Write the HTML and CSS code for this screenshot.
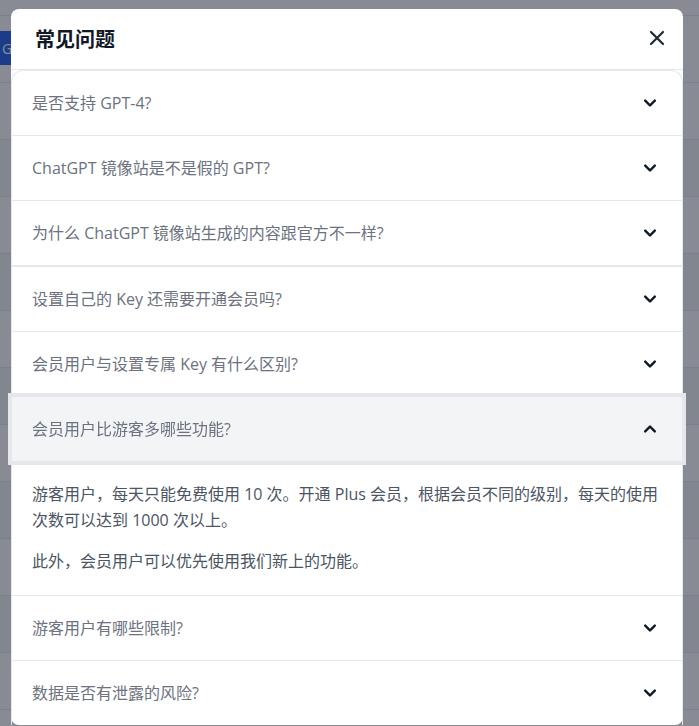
FILE: index.html
```html
<!DOCTYPE html>
<html>
<head>
  <meta charset="UTF-8">
  <link rel="stylesheet" href="styles.css">
</head>
<body>
  <div class="page">
    <div class="topbar"></div>
    <div class="toolbar">
      <button class="blue-button">GPT</button>
    </div>
    <div class="row"></div>
    <div class="row alt"></div>
    <div class="row"></div>
    <div class="row alt"></div>
    <div class="row"></div>
    <div class="row alt"></div>
    <div class="row"></div>
    <div class="row alt"></div>
    <div class="row"></div>
    <div class="row alt"></div>
    <div class="row"></div>
  </div>

  <div class="overlay">
    <div class="modal">
      <div class="modal-header">
        <h3>常见问题</h3>
        <button class="close-button">
          <svg viewBox="0 0 24 24" fill="none" stroke="currentColor" stroke-width="2.2" stroke-linecap="round"><path d="M6 6l12 12M18 6L6 18"/></svg>
        </button>
      </div>

      <div class="accordion">
        <div class="faq-item">
          <button class="question"><span>是否支持 GPT-4?</span>
            <svg class="chevron" viewBox="0 0 20 20" fill="currentColor"><path fill-rule="evenodd" d="M5.293 7.293a1 1 0 011.414 0L10 10.586l3.293-3.293a1 1 0 111.414 1.414l-4 4a1 1 0 01-1.414 0l-4-4a1 1 0 010-1.414z" clip-rule="evenodd"/></svg>
          </button>
        </div>
        <div class="faq-item">
          <button class="question"><span>ChatGPT 镜像站是不是假的 GPT?</span>
            <svg class="chevron" viewBox="0 0 20 20" fill="currentColor"><path fill-rule="evenodd" d="M5.293 7.293a1 1 0 011.414 0L10 10.586l3.293-3.293a1 1 0 111.414 1.414l-4 4a1 1 0 01-1.414 0l-4-4a1 1 0 010-1.414z" clip-rule="evenodd"/></svg>
          </button>
        </div>
        <div class="faq-item">
          <button class="question"><span>为什么 ChatGPT 镜像站生成的内容跟官方不一样?</span>
            <svg class="chevron" viewBox="0 0 20 20" fill="currentColor"><path fill-rule="evenodd" d="M5.293 7.293a1 1 0 011.414 0L10 10.586l3.293-3.293a1 1 0 111.414 1.414l-4 4a1 1 0 01-1.414 0l-4-4a1 1 0 010-1.414z" clip-rule="evenodd"/></svg>
          </button>
        </div>
        <div class="faq-item group-start">
          <button class="question"><span>设置自己的 Key 还需要开通会员吗?</span>
            <svg class="chevron" viewBox="0 0 20 20" fill="currentColor"><path fill-rule="evenodd" d="M5.293 7.293a1 1 0 011.414 0L10 10.586l3.293-3.293a1 1 0 111.414 1.414l-4 4a1 1 0 01-1.414 0l-4-4a1 1 0 010-1.414z" clip-rule="evenodd"/></svg>
          </button>
        </div>
        <div class="faq-item">
          <button class="question"><span>会员用户与设置专属 Key 有什么区别?</span>
            <svg class="chevron" viewBox="0 0 20 20" fill="currentColor"><path fill-rule="evenodd" d="M5.293 7.293a1 1 0 011.414 0L10 10.586l3.293-3.293a1 1 0 111.414 1.414l-4 4a1 1 0 01-1.414 0l-4-4a1 1 0 010-1.414z" clip-rule="evenodd"/></svg>
          </button>
        </div>
        <div class="faq-item open">
          <button class="question"><span>会员用户比游客多哪些功能?</span>
            <svg class="chevron" viewBox="0 0 20 20" fill="currentColor"><path fill-rule="evenodd" d="M5.293 7.293a1 1 0 011.414 0L10 10.586l3.293-3.293a1 1 0 111.414 1.414l-4 4a1 1 0 01-1.414 0l-4-4a1 1 0 010-1.414z" clip-rule="evenodd"/></svg>
          </button>
          <div class="answer">
            <p>游客用户，每天只能免费使用 10 次。开通 Plus 会员，根据会员不同的级别，每天的使用次数可以达到 1000 次以上。</p>
            <p>此外，会员用户可以优先使用我们新上的功能。</p>
          </div>
        </div>
        <div class="faq-item">
          <button class="question"><span>游客用户有哪些限制?</span>
            <svg class="chevron" viewBox="0 0 20 20" fill="currentColor"><path fill-rule="evenodd" d="M5.293 7.293a1 1 0 011.414 0L10 10.586l3.293-3.293a1 1 0 111.414 1.414l-4 4a1 1 0 01-1.414 0l-4-4a1 1 0 010-1.414z" clip-rule="evenodd"/></svg>
          </button>
        </div>
        <div class="faq-item">
          <button class="question"><span>数据是否有泄露的风险?</span>
            <svg class="chevron" viewBox="0 0 20 20" fill="currentColor"><path fill-rule="evenodd" d="M5.293 7.293a1 1 0 011.414 0L10 10.586l3.293-3.293a1 1 0 111.414 1.414l-4 4a1 1 0 01-1.414 0l-4-4a1 1 0 010-1.414z" clip-rule="evenodd"/></svg>
          </button>
        </div>
      </div>
    </div>
  </div>
</body>
</html>
```

FILE: styles.css
```css
body {
  margin: 0;
  height: 726px;
  overflow: hidden;
  font-family: "Open Sans", "Noto Sans CJK SC", sans-serif;
  background: #ffffff;
}

/* page behind the dialog */
.topbar {
  height: 15px;
  border-bottom: 1px solid #e5e7eb;
}

.toolbar {
  height: 67px;
  padding-top: 15px;
  box-sizing: border-box;
  border-bottom: 1px solid #e5e7eb;
}

.blue-button {
  margin-left: -14px;
  height: 34px;
  padding: 0 16px;
  border: none;
  border-radius: 6px;
  background: #2563eb;
  color: white;
  font-family: inherit;
  font-size: 14px;
}

.row {
  height: 56px;
  border-bottom: 1px solid #e5e7eb;
}

.row.alt {
  background: #f3f4f6;
}

/* dialog */
.overlay {
  position: fixed;
  inset: 0;
  background: rgba(17, 24, 39, 0.5);
  padding: 9px 0 0 11px;
}

.modal {
  width: 672px;
  background: white;
  border-radius: 8px;
}

.modal-header {
  display: flex;
  align-items: center;
  justify-content: space-between;
  padding: 16px 14px 16px 24px;
  border-bottom: 1px solid #e5e7eb;
}

.modal-header h3 {
  margin: 0;
  font-family: "Noto Sans CJK SC", sans-serif;
  font-size: 20px;
  line-height: 28px;
  font-weight: 700;
  color: #111827;
}

.close-button {
  display: flex;
  margin-top: -3px;
  padding: 0;
  border: none;
  background: transparent;
  color: #1f2937;
  cursor: pointer;
}

.close-button svg {
  width: 24px;
  height: 24px;
}

.accordion {
  border: 1px solid #e5e7eb;
  border-bottom: none;
  border-radius: 12px 12px 0 0;
}

.faq-item + .faq-item {
  border-top: 1px solid #e5e7eb;
}

.faq-item.group-start {
  border-top-width: 2px;
}

.question {
  display: flex;
  align-items: center;
  justify-content: space-between;
  width: 100%;
  padding: 20px;
  border: none;
  background: transparent;
  font-family: inherit;
  font-size: 16px;
  line-height: 24px;
  color: #6b7280;
  text-align: left;
  cursor: pointer;
}

.chevron {
  width: 24px;
  height: 24px;
  color: #111827;
  flex-shrink: 0;
}

.open .question {
  position: relative;
  background: #f3f4f6;
  box-shadow: 0 0 0 4px #e5e7eb;
}

.open .chevron {
  transform: rotate(180deg);
}

.answer {
  padding: 20px;
  border-top: 1px solid #e5e7eb;
}

.answer p {
  margin: 0 0 16px 0;
  font-size: 16px;
  line-height: 1.6;
  color: #4b5563;
}

.answer p:last-child {
  margin-bottom: 0;
}
```
